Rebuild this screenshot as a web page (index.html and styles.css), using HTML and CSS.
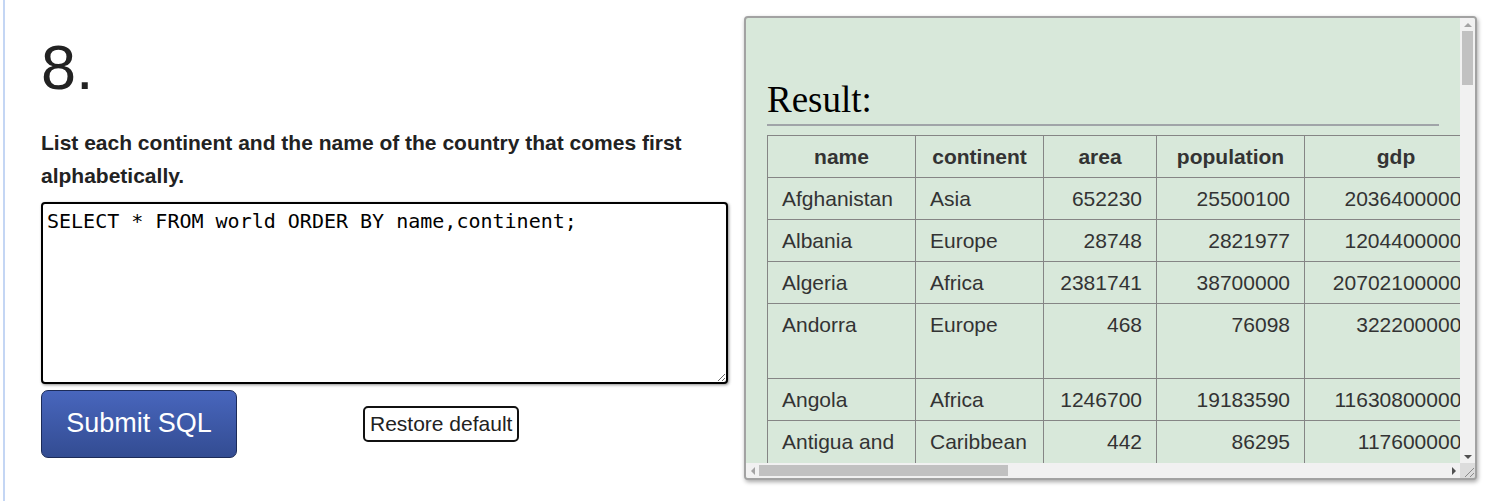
FILE: index.html
```html
<!DOCTYPE html>
<html lang="en">
<head>
<meta charset="utf-8">
<title>SQL 8</title>
<link rel="stylesheet" href="styles.css">
</head>
<body>
<div class="page">
  <div class="question">
    <h1 class="qnum">8.</h1>
    <p class="qtext">List each continent and the name of the country that comes first alphabetically.</p>
    <textarea class="sql" spellcheck="false">SELECT * FROM world ORDER BY name,continent;</textarea>
    <div class="actions">
      <button class="submit" type="button">Submit SQL</button>
      <button class="restore" type="button">Restore default</button>
    </div>
  </div>
  <div class="result">
    <div class="viewport">
      <h2 class="result-title">Result:</h2>
      <table class="grid">
        <colgroup>
          <col class="c-name"><col class="c-cont"><col class="c-area"><col class="c-pop"><col class="c-gdp"><col class="c-cap"><col class="c-tld"><col class="c-flag">
        </colgroup>
        <thead>
          <tr><th>name</th><th>continent</th><th>area</th><th>population</th><th>gdp</th><th>capital</th><th>tld</th><th>flag</th></tr>
        </thead>
        <tbody>
          <tr><td>Afghanistan</td><td>Asia</td><td class="num">652230</td><td class="num">25500100</td><td class="num">20364000000</td><td>Kabul</td><td>.af</td><td class="flag">//upload.wikimedia.org/wikipedia/commons/9/9a/Flag_of_Afghanistan.svg</td></tr>
          <tr><td>Albania</td><td>Europe</td><td class="num">28748</td><td class="num">2821977</td><td class="num">12044000000</td><td>Tirana</td><td>.al</td><td class="flag">//upload.wikimedia.org/wikipedia/commons/3/36/Flag_of_Albania.svg</td></tr>
          <tr><td>Algeria</td><td>Africa</td><td class="num">2381741</td><td class="num">38700000</td><td class="num">207021000000</td><td>Algiers</td><td>.dz</td><td class="flag">//upload.wikimedia.org/wikipedia/commons/7/77/Flag_of_Algeria.svg</td></tr>
          <tr><td>Andorra</td><td>Europe</td><td class="num">468</td><td class="num">76098</td><td class="num">3222000000</td><td>Andorra la Vella</td><td>.ad</td><td class="flag">//upload.wikimedia.org/wikipedia/commons/1/19/Flag_of_Andorra.svg</td></tr>
          <tr><td>Angola</td><td>Africa</td><td class="num">1246700</td><td class="num">19183590</td><td class="num">116308000000</td><td>Luanda</td><td>.ao</td><td class="flag">//upload.wikimedia.org/wikipedia/commons/9/9d/Flag_of_Angola.svg</td></tr>
          <tr><td>Antigua and Barbuda</td><td>Caribbean</td><td class="num">442</td><td class="num">86295</td><td class="num">1176000000</td><td>St. John's</td><td>.ag</td><td class="flag">//upload.wikimedia.org/wikipedia/commons/8/89/Flag_of_Antigua_and_Barbuda.svg</td></tr>
          <tr><td>Argentina</td><td>South America</td><td class="num">2780400</td><td class="num">42669500</td><td class="num">477028000000</td><td>Buenos Aires</td><td>.ar</td><td class="flag">//upload.wikimedia.org/wikipedia/commons/1/1a/Flag_of_Argentina.svg</td></tr>
          <tr><td>Armenia</td><td>Eurasia</td><td class="num">29743</td><td class="num">3017400</td><td class="num">10419000000</td><td>Yerevan</td><td>.am</td><td class="flag">//upload.wikimedia.org/wikipedia/commons/2/2f/Flag_of_Armenia.svg</td></tr>
          <tr><td>Australia</td><td>Oceania</td><td class="num">7692024</td><td class="num">23545500</td><td class="num">1416950000000</td><td>Canberra</td><td>.au</td><td class="flag">//upload.wikimedia.org/wikipedia/commons/b/b9/Flag_of_Australia.svg</td></tr>
          <tr><td>Austria</td><td>Europe</td><td class="num">83871</td><td class="num">8504850</td><td class="num">394708000000</td><td>Vienna</td><td>.at</td><td class="flag">//upload.wikimedia.org/wikipedia/commons/4/41/Flag_of_Austria.svg</td></tr>
          <tr><td>Azerbaijan</td><td>Asia</td><td class="num">86600</td><td class="num">9477100</td><td class="num">68804000000</td><td>Baku</td><td>.az</td><td class="flag">//upload.wikimedia.org/wikipedia/commons/d/dd/Flag_of_Azerbaijan.svg</td></tr>
          <tr><td>Bahamas</td><td>Caribbean</td><td class="num">13943</td><td class="num">351461</td><td class="num">8043000000</td><td>Nassau</td><td>.bs</td><td class="flag">//upload.wikimedia.org/wikipedia/commons/9/93/Flag_of_the_Bahamas.svg</td></tr>
          <tr><td>Bahrain</td><td>Asia</td><td class="num">765</td><td class="num">1234571</td><td class="num">29044000000</td><td>Manama</td><td>.bh</td><td class="flag">//upload.wikimedia.org/wikipedia/commons/2/2c/Flag_of_Bahrain.svg</td></tr>
          <tr><td>Bangladesh</td><td>Asia</td><td class="num">143998</td><td class="num">156557000</td><td class="num">129857000000</td><td>Dhaka</td><td>.bd</td><td class="flag">//upload.wikimedia.org/wikipedia/commons/f/f9/Flag_of_Bangladesh.svg</td></tr>
          <tr><td>Barbados</td><td>Caribbean</td><td class="num">430</td><td class="num">285000</td><td class="num">4533000000</td><td>Bridgetown</td><td>.bb</td><td class="flag">//upload.wikimedia.org/wikipedia/commons/e/ef/Flag_of_Barbados.svg</td></tr>
          <tr><td>Belarus</td><td>Europe</td><td class="num">207600</td><td class="num">9467000</td><td class="num">63267000000</td><td>Minsk</td><td>.by</td><td class="flag">//upload.wikimedia.org/wikipedia/commons/8/85/Flag_of_Belarus.svg</td></tr>
          <tr><td>Belgium</td><td>Europe</td><td class="num">30528</td><td class="num">11198638</td><td class="num">482924000000</td><td>Brussels</td><td>.be</td><td class="flag">//upload.wikimedia.org/wikipedia/commons/6/65/Flag_of_Belgium.svg</td></tr>
          <tr><td>Belize</td><td>North America</td><td class="num">22966</td><td class="num">349728</td><td class="num">1581000000</td><td>Belmopan</td><td>.bz</td><td class="flag">//upload.wikimedia.org/wikipedia/commons/e/e7/Flag_of_Belize.svg</td></tr>
          <tr><td>Benin</td><td>Africa</td><td class="num">112622</td><td class="num">9988068</td><td class="num">7557000000</td><td>Porto-Novo</td><td>.bj</td><td class="flag">//upload.wikimedia.org/wikipedia/commons/0/0a/Flag_of_Benin.svg</td></tr>
          <tr><td>Bhutan</td><td>Asia</td><td class="num">38394</td><td class="num">753947</td><td class="num">1823000000</td><td>Thimphu</td><td>.bt</td><td class="flag">//upload.wikimedia.org/wikipedia/commons/9/91/Flag_of_Bhutan.svg</td></tr>
        </tbody>
      </table>
    </div>
    <div class="vbar">
      <span class="sb-btn up"></span>
      <span class="sb-track"><span class="sb-thumb"></span></span>
      <span class="sb-btn down"></span>
    </div>
    <div class="hbar">
      <span class="sb-btn left"></span>
      <span class="sb-track"><span class="sb-thumb"></span></span>
      <span class="sb-btn right"></span>
    </div>
    <div class="corner">
      <svg class="grip" width="15" height="15" viewBox="0 0 15 15" aria-hidden="true">
        <path d="M5 14 L14 5 M10 14 L14 10" stroke="#8a8a8a" stroke-width="1" fill="none"/>
      </svg>
    </div>
  </div>
</div>
</body>
</html>
```
FILE: styles.css
```css
html, body {
  margin: 0;
  padding: 0;
  background: #fff;
}

body {
  font-family: "Liberation Sans", Arial, sans-serif;
  color: #222;
}

.page {
  display: flex;
  align-items: flex-start;
  gap: 16px;
  min-height: 501px;
  box-sizing: border-box;
  margin-left: 3px;
  border-left: 2px solid #c4d6f4;
  padding-left: 36px;
}

.question {
  width: 687px;
  flex: none;
}

.qnum {
  margin: 31px 0 0;
  font-size: 63px;
  font-weight: normal;
  line-height: 1.15;
  color: #222;
}

.qtext {
  margin: 23px 0 0;
  font-size: 21px;
  font-weight: bold;
  line-height: 33px;
  color: #222;
}

.sql {
  display: block;
  box-sizing: border-box;
  width: 687px;
  height: 182px;
  margin: 10px 0 0;
  padding: 2px 4px;
  border: 2px solid #000;
  border-radius: 4px;
  box-shadow: 1px 1px 3px rgba(0, 0, 0, 0.45);
  font-family: "DejaVu Sans Mono", monospace;
  font-size: 20px;
  line-height: 31px;
  color: #000;
  background: #fff;
}

.actions {
  display: flex;
  align-items: center;
  margin-top: 6px;
}

.submit {
  box-sizing: border-box;
  width: 196px;
  height: 68px;
  padding: 0 0 2px;
  border: 1px solid #1c2b58;
  border-radius: 7px;
  background: linear-gradient(to bottom, #4866bd, #334c92);
  color: #fff;
  font-family: "Liberation Sans", Arial, sans-serif;
  font-size: 27px;
}

.restore {
  box-sizing: border-box;
  height: 36px;
  margin-left: 126px;
  padding: 0 5px;
  border: 2px solid #111;
  border-radius: 5px;
  background: #fff;
  color: #222;
  font-family: "Liberation Sans", Arial, sans-serif;
  font-size: 21px;
}

/* result panel: a viewport plus drawn scrollbars */
.result {
  flex: none;
  box-sizing: border-box;
  width: 733px;
  height: 464px;
  margin-top: 16px;
  border: 2px solid #a2a2a2;
  border-radius: 4px;
  box-shadow: 1px 2px 4px rgba(0, 0, 0, 0.35);
  background: #d8e8da;
  overflow: hidden;
  display: grid;
  grid-template-columns: minmax(0, 1fr) 15px;
  grid-template-rows: minmax(0, 1fr) 15px;
}

.viewport {
  overflow: hidden;
  padding: 0 21px;
}

.result-title {
  margin: 61px 0 0;
  padding-bottom: 4px;
  border-bottom: 2px solid #a0a4a8;
  font-family: "Liberation Serif", "Times New Roman", serif;
  font-size: 37px;
  font-weight: normal;
  line-height: 41px;
  color: #000;
}

.grid {
  margin-top: 9px;
  border-collapse: collapse;
  table-layout: fixed;
  width: 1921px;
  font-size: 21px;
  line-height: 33px;
  color: #333;
}

.c-name { width: 148px; }
.c-cont { width: 128px; }
.c-area { width: 113px; }
.c-pop { width: 148px; }
.c-gdp { width: 183px; }
.c-cap { width: 170px; }
.c-tld { width: 64px; }
.c-flag { width: 967px; }

.grid th,
.grid td {
  border: 1px solid #858585;
  padding: 4px 14px;
  vertical-align: top;
  text-align: left;
}

.grid th {
  text-align: center;
  font-weight: bold;
}

.grid td.num {
  text-align: right;
}

.grid td.flag {
  overflow-wrap: anywhere;
}

/* scrollbars */
.vbar,
.hbar {
  background: #f1f1f1;
  display: flex;
}

.vbar {
  flex-direction: column;
}

.sb-btn {
  flex: none;
  display: flex;
  align-items: center;
  justify-content: center;
}

.vbar .sb-btn {
  height: 13px;
}

.hbar .sb-btn {
  width: 13px;
}

.sb-btn::before {
  content: "";
  width: 0;
  height: 0;
  border-style: solid;
  border-color: transparent;
}

.sb-btn.up::before {
  border-width: 0 4px 4px;
  border-bottom-color: #a3a3a3;
}

.sb-btn.down::before {
  border-width: 4px 4px 0;
  border-top-color: #505050;
}

.sb-btn.left::before {
  border-width: 4px 4px 4px 0;
  border-right-color: #a3a3a3;
}

.sb-btn.right::before {
  border-width: 4px 0 4px 4px;
  border-left-color: #505050;
}

.sb-track {
  flex: 1;
  display: flex;
}

.vbar .sb-track {
  flex-direction: column;
  padding: 0 2px;
}

.hbar .sb-track {
  padding: 2px 0;
}

.sb-thumb {
  background: #c1c1c1;
}

.vbar .sb-thumb {
  height: 54px;
}

.hbar .sb-thumb {
  width: 249px;
}

.corner {
  background: #dcdcdc;
}

.grip {
  display: block;
}
```
